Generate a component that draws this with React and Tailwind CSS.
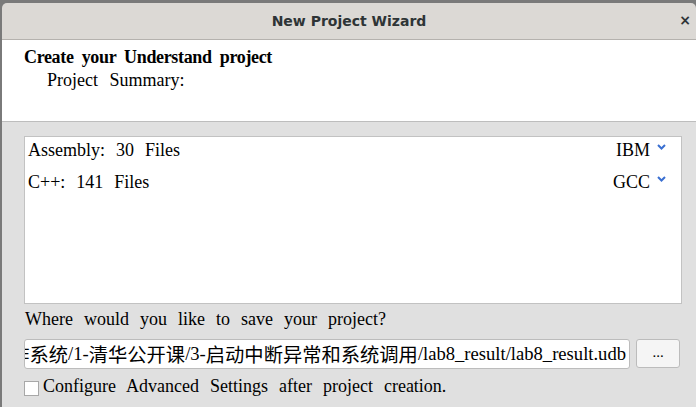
import React from "react";

const serif = "font-['Liberation_Serif','Noto_Sans_CJK_SC',serif]";
const cjk = "font-['Noto_Sans_CJK_SC',sans-serif] text-[19.3px]";

function Chevron() {
  return (
    <svg width="9" height="6" viewBox="0 0 9 6" className="-mt-[7px]">
      <path d="M1 1 L4.5 4.5 L8 1" stroke="#3a6fd1" strokeWidth="2" fill="none" />
    </svg>
  );
}

export default function App() {
  return (
    <div className="w-[696px] h-[407px] bg-[#7a7a7a] pt-[3px] pl-[2px] overflow-hidden">
      <div className="h-[404px] flex flex-col rounded-tl-[5px] rounded-tr-[5px] overflow-hidden">
        {/* Title bar */}
        <div className="relative h-[37px] shrink-0 bg-[#dcd9d5] border-b border-[#b5b2ae] flex items-center justify-center">
          <span className="font-['DejaVu_Sans',sans-serif] font-bold text-[14px] text-[#2e3436]">
            New Project Wizard
          </span>
          <span className="absolute right-[5px] top-[10px] font-['DejaVu_Sans',sans-serif] font-bold text-[14px] text-[#2e3436] leading-none">
            ×
          </span>
        </div>
        {/* Header */}
        <div className={`h-[82px] shrink-0 bg-white border-b border-[#bdbdbd] pl-[22px] pt-[5px] ${serif} text-black`}>
          <div className="font-bold text-[18px] leading-[24px] [word-spacing:4px] tracking-[-0.35px]">
            Create your Understand project
          </div>
          <div className="pl-[23px] text-[18px] leading-[23px] [word-spacing:7px]">Project Summary:</div>
        </div>
        {/* Body */}
        <div className={`flex-1 bg-[#e0e0e0] pl-[22px] pr-[14px] pt-[14px] ${serif} text-black`}>
          <div className="h-[168px] bg-white border border-[#c2c2c2] text-[18px] [word-spacing:6.5px]">
            <div className="flex items-center justify-between h-[27px] pl-[3px] pr-[15px]">
              <span>Assembly: 30 Files</span>
              <span className="flex items-center gap-[7px]">
                IBM
                <Chevron />
              </span>
            </div>
            <div className="flex items-center justify-between h-[36px] pl-[3px] pr-[15px]">
              <span>C++: 141 Files</span>
              <span className="flex items-center gap-[7px]">
                GCC
                <Chevron />
              </span>
            </div>
          </div>
          <div className="mt-[2px] h-[26px] pl-[1px] text-[18px] leading-[26px] [word-spacing:6.5px]">
            Where would you like to save your project?
          </div>
          <div className="mt-[7px] flex gap-[6px]">
            <div className="w-[606px] h-[30px] bg-white border border-[#bcbcbc] rounded-[3px] flex justify-end items-center overflow-hidden pr-[3px] whitespace-nowrap text-[18.6px]">
              <span className="flex items-center">
                <span className={cjk}>操作系统</span>
                <span>/1-</span>
                <span className={cjk}>清华公开课</span>
                <span>/3-</span>
                <span className={cjk}>启动中断异常和系统调用</span>
                <span>/lab8_result/lab8_result.udb</span>
              </span>
            </div>
            <div className="w-[44px] h-[29px] bg-[#f5f5f5] border border-[#bcbcbc] rounded-[3px] flex items-center justify-center text-[15px] pb-[3px]">
              ...
            </div>
          </div>
          <div className="mt-[7px] h-[20px] flex items-center gap-[4px] text-[18px] [word-spacing:6.5px]">
            <div className="w-[15px] h-[15px] bg-white border border-[#a8a8a8] mt-[4px]" />
            <span>Configure Advanced Settings after project creation.</span>
          </div>
        </div>
      </div>
    </div>
  );
}
